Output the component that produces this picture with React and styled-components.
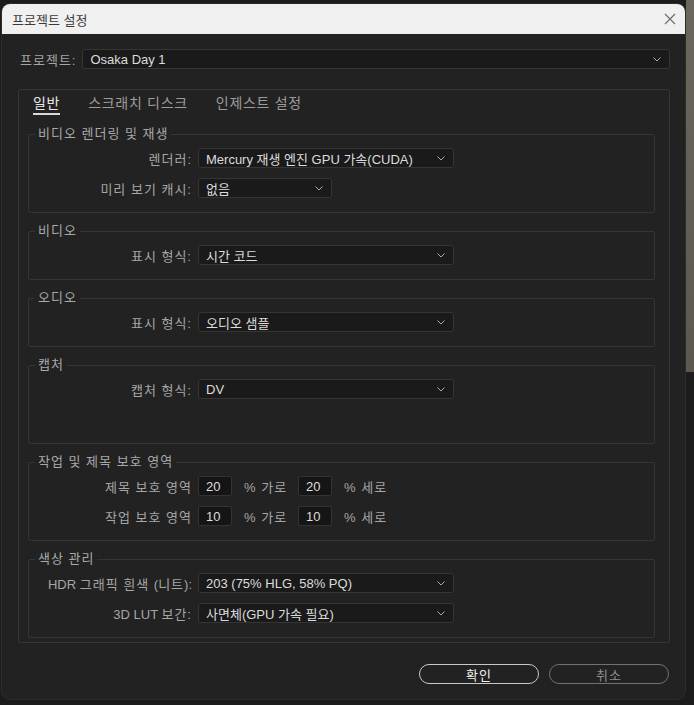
import React from "react";
import styled, { createGlobalStyle } from "styled-components";

const Global = createGlobalStyle`
  html, body { margin: 0; padding: 0; }
  body {
    width: 694px; height: 705px; overflow: hidden;
    background:
      linear-gradient(#6c675d, #5d584f) no-repeat right top / 8px 372px,
      #1c1c1c;
    font-family: "Liberation Sans", "Noto Sans CJK KR", sans-serif;
  }
`;

const Stage = styled.div`
  padding: 4px 0 0 2px;
`;

const Dialog = styled.div`
  width: 683px;
  height: 695px;
  background: #222222;
  border-radius: 8px;
  overflow: hidden;
  display: flex;
  flex-direction: column;
  box-shadow: 0 0 0 1px #2c2c2c;
`;

const TitleBar = styled.div`
  height: 30px;
  flex: none;
  background: #f0f0f0;
  display: flex;
  align-items: center;
  justify-content: space-between;
  padding: 0 9px 0 10px;
  font-size: 13px;
  color: #3a3a3a;
`;

const CloseIcon = () => (
  <svg width="12" height="12" viewBox="0 0 12 12">
    <path d="M1 1 L11 11 M11 1 L1 11" stroke="#6a6a6a" strokeWidth="1.1" fill="none" />
  </svg>
);

const Body = styled.div`
  flex: 1;
  display: flex;
  flex-direction: column;
  padding: 15px 15px 15px 16px;
`;

const ProjectRow = styled.div`
  display: flex;
  align-items: center;
  gap: 6px;
  padding-left: 2px;
`;

const Label = styled.span`
  font-size: 13px;
  letter-spacing: 1px;
  color: #a6a6a6;
  white-space: nowrap;
  text-align: ${(p) => (p.$right ? "right" : "left")};
`;

const Latin = styled.span`
  letter-spacing: 0;
`;

const Select = styled.div`
  box-sizing: border-box;
  height: 20px;
  width: ${(p) => (p.$w ? `${p.$w}px` : "auto")};
  flex: ${(p) => (p.$w ? "none" : "1")};
  background: #1a1a1a;
  border: 1px solid #353535;
  border-radius: 3px;
  display: flex;
  align-items: center;
  justify-content: space-between;
  padding: 0 8px 0 7px;
  font-size: 13px;
  color: #dcdcdc;
  white-space: nowrap;
`;

const Chevron = () => (
  <svg width="8" height="5" viewBox="0 0 8 5">
    <polyline points="0.5,0.5 4,4 7.5,0.5" stroke="#a8a8a8" strokeWidth="1" fill="none" />
  </svg>
);

const Panel = styled.div`
  margin-top: 20px;
  border: 1px solid #363636;
  border-radius: 2px;
  padding: 4px 14px 4px 9px;
  display: flex;
  flex-direction: column;
`;

const Tabs = styled.div`
  display: flex;
  gap: 28px;
  padding-left: 5px;
  margin-bottom: 11px;
`;

const Tab = styled.div`
  font-size: 14px;
  line-height: 18px;
  letter-spacing: 0.7px;
  padding-bottom: 1px;
  color: ${(p) => (p.$active ? "#e8e8e8" : "#9c9c9c")};
  border-bottom: 2px solid ${(p) => (p.$active ? "#d8d8d8" : "transparent")};
`;

const Groups = styled.div`
  display: flex;
  flex-direction: column;
  gap: 10px;
`;

const Group = styled.fieldset`
  margin: 0;
  min-width: 0;
  border: 1px solid #353535;
  border-radius: 2px;
  padding: 6px 0 ${(p) => p.$pb || 14}px;
  display: flex;
  flex-direction: column;
  gap: 10px;
`;

const Legend = styled.legend`
  margin-left: 6px;
  padding: 0 3px;
  font-size: 13px;
  line-height: 16px;
  letter-spacing: 1px;
  color: #a8a8a8;
`;

const Row = styled.div`
  display: grid;
  grid-template-columns: 163px auto;
  column-gap: 6px;
  align-items: center;
  justify-content: start;
`;

const Inline = styled.div`
  display: flex;
  align-items: center;
`;

const NumInput = styled.div`
  box-sizing: border-box;
  width: 34px;
  height: 20px;
  background: #151515;
  border: 1px solid #333;
  border-radius: 2px;
  font-size: 13px;
  color: #dedede;
  display: flex;
  align-items: center;
  padding-left: 7px;
`;

const Unit = styled.span`
  font-size: 13px;
  letter-spacing: 1px;
  color: #a6a6a6;
  margin: 0 11px 0 12px;
  white-space: nowrap;
`;

const Footer = styled.div`
  margin-top: auto;
  display: flex;
  justify-content: flex-end;
  gap: 10px;
  padding-right: 1px;
`;

const Button = styled.div`
  box-sizing: border-box;
  width: 120px;
  height: 20px;
  border-radius: 10px;
  border: 1.5px solid ${(p) => (p.$primary ? "#c9c9c9" : "#727272")};
  color: ${(p) => (p.$primary ? "#f2f2f2" : "#8e8e8e")};
  font-size: 13px;
  letter-spacing: 1px;
  display: flex;
  align-items: center;
  justify-content: center;
`;

const Dropdown = ({ w, children }) => (
  <Select $w={w}>
    <span>{children}</span>
    <Chevron />
  </Select>
);

const Field = ({ label, children }) => (
  <Row>
    <Label $right>{label}</Label>
    {children}
  </Row>
);

const SafeRow = ({ label, a, b }) => (
  <Field label={label}>
    <Inline>
      <NumInput>{a}</NumInput>
      <Unit>% 가로</Unit>
      <NumInput>{b}</NumInput>
      <Unit>% 세로</Unit>
    </Inline>
  </Field>
);

export default function App() {
  return (
    <>
      <Global />
      <Stage>
        <Dialog>
          <TitleBar>
            <span>프로젝트 설정</span>
            <CloseIcon />
          </TitleBar>
          <Body>
            <ProjectRow>
              <Label>프로젝트:</Label>
              <Dropdown>Osaka Day 1</Dropdown>
            </ProjectRow>
            <Panel>
              <Tabs>
                <Tab $active>일반</Tab>
                <Tab>스크래치 디스크</Tab>
                <Tab>인제스트 설정</Tab>
              </Tabs>
              <Groups>
                <Group>
                  <Legend>비디오 렌더링 및 재생</Legend>
                  <Field label="렌더러:">
                    <Dropdown w={256}>Mercury 재생 엔진 GPU 가속(CUDA)</Dropdown>
                  </Field>
                  <Field label="미리 보기 캐시:">
                    <Dropdown w={134}>없음</Dropdown>
                  </Field>
                </Group>
                <Group>
                  <Legend>비디오</Legend>
                  <Field label="표시 형식:">
                    <Dropdown w={256}>시간 코드</Dropdown>
                  </Field>
                </Group>
                <Group>
                  <Legend>오디오</Legend>
                  <Field label="표시 형식:">
                    <Dropdown w={256}>오디오 샘플</Dropdown>
                  </Field>
                </Group>
                <Group $pb={44}>
                  <Legend>캡처</Legend>
                  <Field label="캡처 형식:">
                    <Dropdown w={256}>DV</Dropdown>
                  </Field>
                </Group>
                <Group>
                  <Legend>작업 및 제목 보호 영역</Legend>
                  <SafeRow label="제목 보호 영역" a="20" b="20" />
                  <SafeRow label="작업 보호 영역" a="10" b="10" />
                </Group>
                <Group>
                  <Legend>색상 관리</Legend>
                  <Field
                    label={
                      <>
                        <Latin>HDR </Latin>그래픽 흰색 <Latin>(</Latin>니트<Latin>):</Latin>
                      </>
                    }
                  >
                    <Dropdown w={256}>203 (75% HLG, 58% PQ)</Dropdown>
                  </Field>
                  <Field
                    label={
                      <>
                        <Latin>3D LUT </Latin>보간:
                      </>
                    }
                  >
                    <Dropdown w={256}>사면체(GPU 가속 필요)</Dropdown>
                  </Field>
                </Group>
              </Groups>
            </Panel>
            <Footer>
              <Button $primary>확인</Button>
              <Button>취소</Button>
            </Footer>
          </Body>
        </Dialog>
      </Stage>
    </>
  );
}
